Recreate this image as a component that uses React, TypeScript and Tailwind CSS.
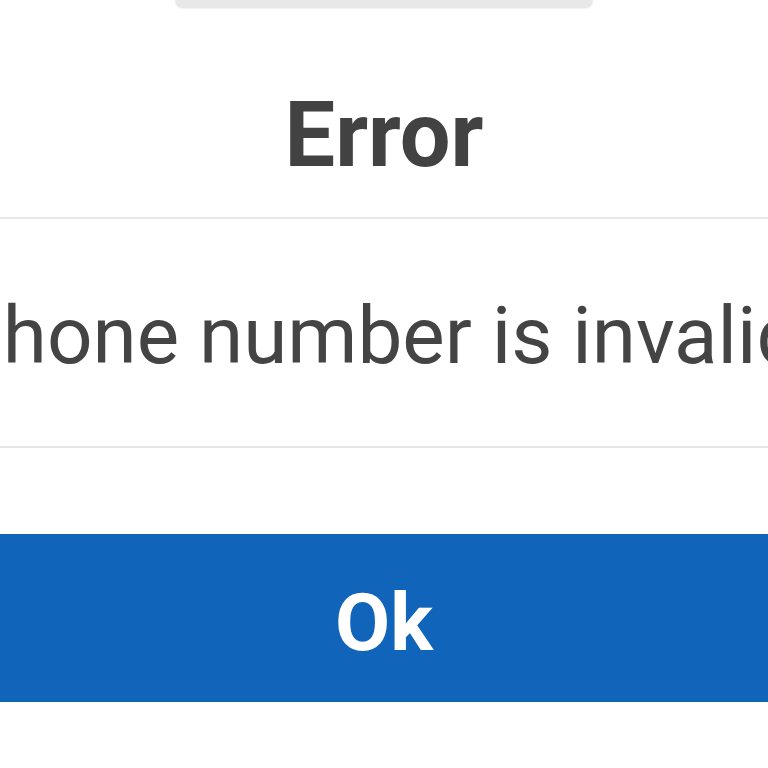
export default function App() {
  return (
    <div className="h-[768px] w-[768px] overflow-hidden bg-white font-['Roboto',sans-serif]">
      {/* drag handle peeking from above */}
      <div className="ml-[175px] h-[8px] w-[418px] rounded-b-[14px] bg-[#e8e8e8] shadow-[0_1px_2px_rgba(0,0,0,0.06)]" />

      <div className="pt-[83px] pb-[36px] text-center">
        <h1 className="text-[90px] leading-[90px] font-bold text-[#424242]">Error</h1>
      </div>
      <div className="h-[2px] bg-[#e6e6e6]" />

      <div className="flex justify-center pt-[77px] pb-[70px]">
        <p className="ml-[-14px] whitespace-nowrap text-[80px] leading-[80px] text-[#444444]">
          Phone number is invalid
        </p>
      </div>
      <div className="h-[2px] bg-[#e6e6e6]" />

      <div className="pt-[86px]">
        <button className="flex h-[168px] w-full items-center justify-center bg-[#1064b9] pt-[10px] text-[80px] leading-[80px] font-bold text-white">
          Ok
        </button>
      </div>
    </div>
  );
}
